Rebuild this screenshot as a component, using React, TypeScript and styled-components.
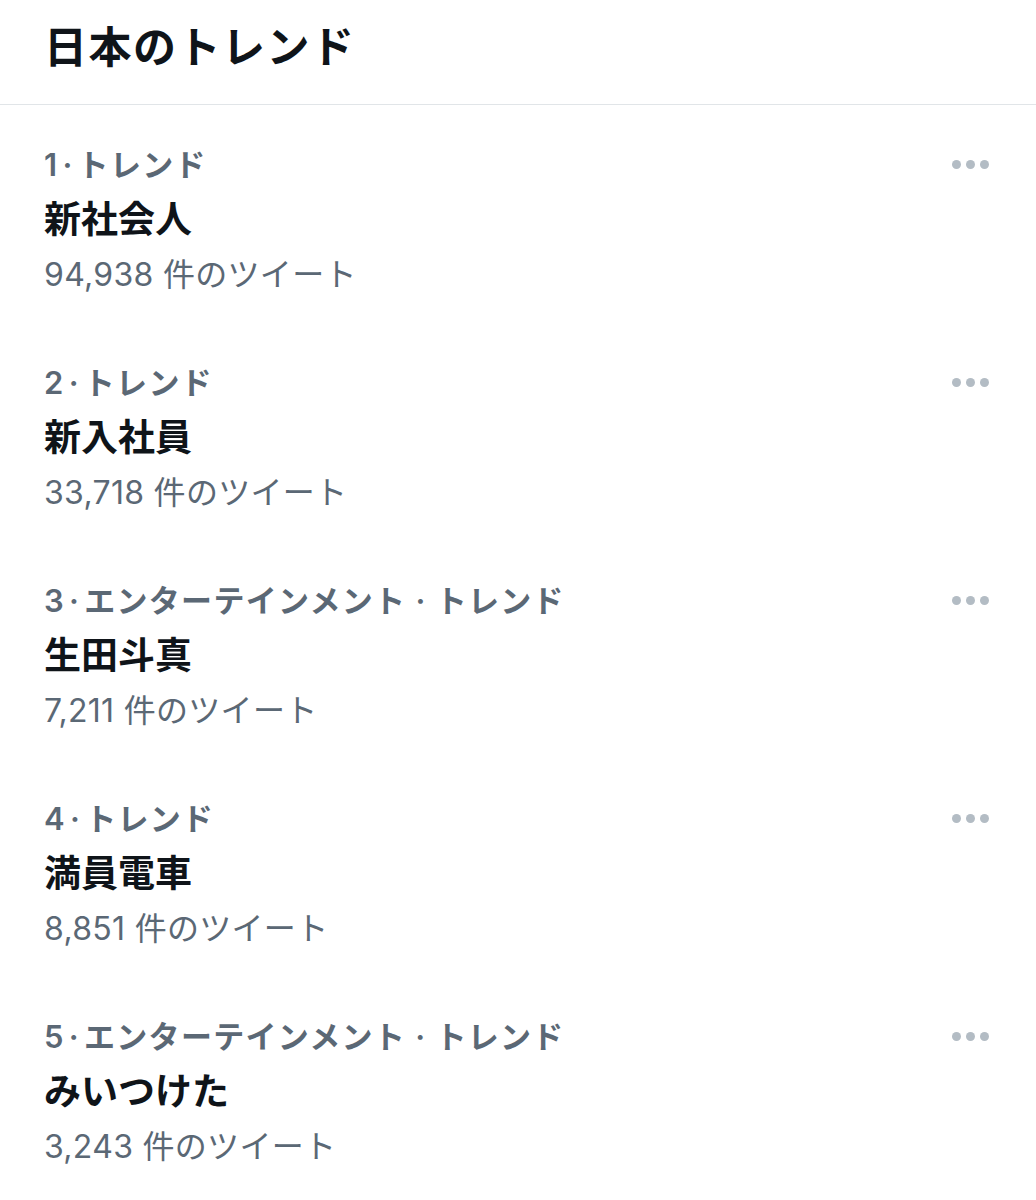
import styled, { createGlobalStyle } from 'styled-components';

const GlobalStyle = createGlobalStyle`
  body {
    margin: 0;
    background: #ffffff;
    font-family: Inter, "Noto Sans CJK JP", sans-serif;
  }
`;

const trends = [
  { rank: 1, category: 'トレンド', name: '新社会人', count: '94,938' },
  { rank: 2, category: 'トレンド', name: '新入社員', count: '33,718' },
  { rank: 3, category: 'エンターテインメント · トレンド', name: '生田斗真', count: '7,211' },
  { rank: 4, category: 'トレンド', name: '満員電車', count: '8,851' },
  { rank: 5, category: 'エンターテインメント · トレンド', name: 'みいつけた', count: '3,243' },
];

const Page = styled.div`
  width: 1036px;
  min-height: 1200px;
  background: #ffffff;
`;

const Header = styled.header`
  height: 105px;
  box-sizing: border-box;
  padding: 0 44px 16px;
  display: flex;
  align-items: center;
  border-bottom: 1.5px solid #e1e5e8;
`;

const Title = styled.h1`
  margin: 0;
  font-size: 43px;
  font-weight: 700;
  color: #0f1419;
  letter-spacing: 1.5px;
`;

const List = styled.ul`
  list-style: none;
  margin: 0;
  padding: 0;
`;

const Row = styled.li`
  display: flex;
  justify-content: space-between;
  align-items: flex-start;
  padding: 32px 47px 21px 44px;
`;

const Body = styled.div`
  display: flex;
  flex-direction: column;
`;

const Meta = styled.div`
  font-size: 31px;
  line-height: 55px;
  font-weight: 600;
  color: #5b6875;
  letter-spacing: 1.3px;
`;

const Sep = styled.span`
  margin: 0 4px;
`;

const Name = styled.div`
  font-size: 37px;
  line-height: 55px;
  font-weight: 700;
  color: #0f1419;
`;

const Count = styled.div`
  font-size: 32px;
  line-height: 55px;
  font-weight: 400;
  color: #5b6875;
  letter-spacing: 0.3px;
`;

const More = styled.div`
  height: 55px;
  display: flex;
  align-items: center;
  gap: 5px;
`;

const Dot = styled.span`
  width: 9px;
  height: 9px;
  border-radius: 50%;
  background: #b3bcc4;
`;

export default function App() {
  return (
    <Page>
      <GlobalStyle />
      <Header>
        <Title>日本のトレンド</Title>
      </Header>
      <List>
        {trends.map((t) => (
          <Row key={t.rank}>
            <Body>
              <Meta>
                {t.rank}
                <Sep>·</Sep>
                {t.category}
              </Meta>
              <Name>{t.name}</Name>
              <Count>{t.count} 件のツイート</Count>
            </Body>
            <More>
              <Dot />
              <Dot />
              <Dot />
            </More>
          </Row>
        ))}
      </List>
    </Page>
  );
}
